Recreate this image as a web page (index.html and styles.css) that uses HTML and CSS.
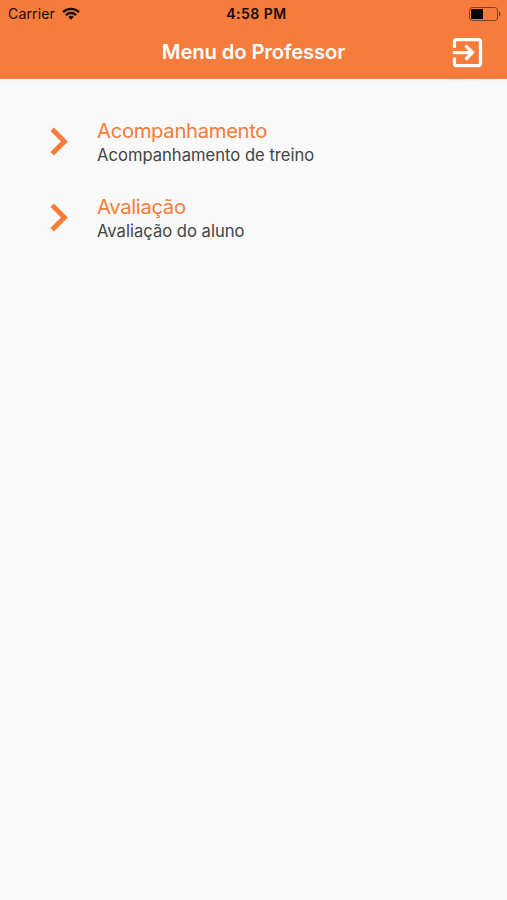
FILE: index.html
```html
<!DOCTYPE html>
<html lang="pt-BR">
<head>
    <meta charset="UTF-8">
    <meta name="viewport" content="width=device-width, initial-scale=1.0">
    <title>Menu do Professor</title>
    <link rel="stylesheet" href="styles.css">
</head>
<body>
    <header class="header">
        <div class="status-bar">
            <div class="carrier">
                <span class="carrier-name">Carrier</span>
                <svg class="wifi" viewBox="0 0 18 13" fill="none" stroke="#180b04" stroke-width="2.3">
                    <path d="M1 5.1a11.4 11.4 0 0 1 16 0"/>
                    <path d="M3.9 8.1a7.3 7.3 0 0 1 10.2 0"/>
                    <path d="M9 12.7L6.3 10a3.8 3.8 0 0 1 5.4 0z" fill="#180b04" stroke="none"/>
                </svg>
            </div>
            <span class="time">4:58 PM</span>
            <svg class="battery" viewBox="0 0 32 14">
                <rect x="0.5" y="0.5" width="28" height="13" rx="2.8" fill="none" stroke="#7d3f1c"/>
                <rect x="2" y="2" width="12" height="10" rx="1" fill="#000"/>
                <path d="M30 4.5c1.8.6 1.8 4.4 0 5z" fill="#7d3f1c"/>
            </svg>
        </div>
        <div class="nav-bar">
            <h1 class="title">Menu do Professor</h1>
            <button class="logout" type="button" aria-label="Sair">
                <svg viewBox="0 0 24 24" fill="#fff">
                    <path d="M10.09 15.59L11.5 17l5-5-5-5-1.41 1.41L12.67 11H3v2h9.67l-2.58 2.59zM19 3H5c-1.11 0-2 .9-2 2v4h2V5h14v14H5v-4H3v4c0 1.1.89 2 2 2h14c1.1 0 2-.9 2-2V5c0-1.1-.9-2-2-2z"/>
                </svg>
            </button>
        </div>
    </header>

    <main class="menu">
        <a class="item">
            <svg class="chevron" viewBox="0 0 24 24">
                <path d="M10 6L8.59 7.41 13.17 12l-4.58 4.59L10 18l6-6z"/>
            </svg>
            <div class="item-text">
                <h2>Acompanhamento</h2>
                <p>Acompanhamento de treino</p>
            </div>
        </a>
        <a class="item">
            <svg class="chevron" viewBox="0 0 24 24">
                <path d="M10 6L8.59 7.41 13.17 12l-4.58 4.59L10 18l6-6z"/>
            </svg>
            <div class="item-text">
                <h2>Avaliação</h2>
                <p>Avaliação do aluno</p>
            </div>
        </a>
    </main>
</body>
</html>
```
FILE: styles.css
```css
* {
    box-sizing: border-box;
}

body {
    margin: 0;
    min-height: 100vh;
    background-color: #f9f9f9;
    font-family: Inter, Roboto, sans-serif;
}

.header {
    height: 79px;
    background-color: #f57c3a;
}

.status-bar {
    display: grid;
    grid-template-columns: 1fr auto 1fr;
    align-items: center;
    height: 27px;
    padding: 0 6px 0 8px;
    color: #180b04;
    font-size: 14px;
    line-height: 27px;
}

.carrier {
    display: flex;
    align-items: center;
    gap: 7px;
}

.carrier-name {
    letter-spacing: 0.15px;
}

.wifi {
    width: 18px;
    height: 13px;
}

.time {
    padding-left: 4px;
    font-weight: 600;
    letter-spacing: 0.5px;
}

.battery {
    justify-self: end;
    width: 32px;
    height: 14px;
}

.nav-bar {
    display: grid;
    grid-template-columns: 1fr auto 1fr;
    align-items: center;
    height: 50px;
    padding-right: 20px;
    padding-left: 20px;
}

.title {
    grid-column: 2;
    margin: 0;
    color: #fff;
    font-size: 20.3px;
    font-weight: 600;
    letter-spacing: -0.15px;
    line-height: 24px;
}

.logout {
    justify-self: end;
    width: 39px;
    height: 39px;
    padding: 0;
    border: none;
    background: none;
}

.logout svg {
    display: block;
}

.menu {
    display: flex;
    flex-direction: column;
    gap: 22px;
    padding: 35px 31px;
}

.item {
    display: flex;
    align-items: center;
    gap: 11px;
    height: 54.5px;
}

.chevron {
    width: 55px;
    height: 55px;
    fill: #f57c3a;
    stroke: #f57c3a;
    stroke-width: 0.25;
}

.item-text h2 {
    margin: 0;
    color: #f57c3a;
    font-size: 20.3px;
    font-weight: 400;
    letter-spacing: -0.35px;
    line-height: 23px;
}

.item-text p {
    margin: 0;
    padding-top: 1px;
    color: #444;
    font-size: 16.6px;
    line-height: 24px;
}

.item-text {
    padding-top: 3px;
}
```
